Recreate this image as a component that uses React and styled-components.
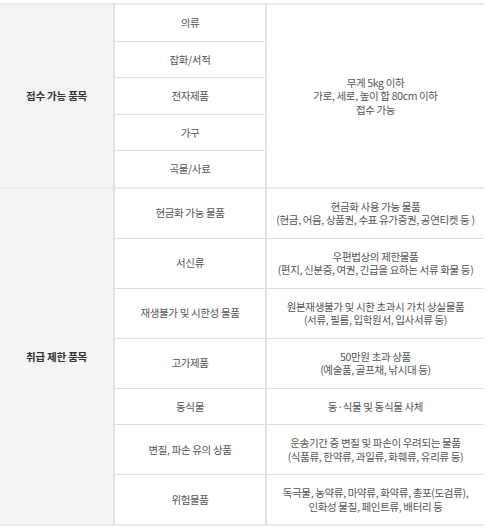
import React from "react";
import styled, { createGlobalStyle } from "styled-components";

const sections = [
  {
    title: "접수 가능 품목",
    rows: [
      { name: "의류" },
      { name: "잡화/서적" },
      { name: "전자제품" },
      { name: "가구" },
      { name: "곡물/사료" },
    ],
    shared: ["무게 5kg 이하", "가로, 세로, 높이 합 80cm 이하", "접수 가능"],
  },
  {
    title: "취급 제한 품목",
    rows: [
      { name: "현금화 가능 물품", desc: ["현금화 사용 가능 물품", "(현금, 어음, 상품권, 수표 유가증권, 공연티켓 등 )"] },
      { name: "서신류", desc: ["우편법상의 제한물품", "(편지, 신분증, 여권, 긴급을 요하는 서류 화물 등)"] },
      { name: "재생불가 및 시한성 물품", desc: ["원본재생불가 및 시한 초과시 가치 상실물품", "(서류, 필름, 입학원서, 입사서류 등)"] },
      { name: "고가제품", desc: ["50만원 초과 상품", "(예술품, 골프채, 낚시대 등)"] },
      { name: "동식물", desc: ["동·식물 및 동식물 사체"] },
      { name: "변질, 파손 유의 상품", desc: ["운송기간 중 변질 및 파손이 우려되는 물품", "(식품류, 한약류, 과일류, 화훼류, 유리류 등)"] },
      { name: "위험물품", desc: ["독극물, 농약류, 마약류, 화약류, 총포(도검류),", "인화성 물질, 페인트류, 배터리 등"] },
    ],
  },
];

const Lines = ({ lines }) =>
  lines.map((line, i) => (
    <React.Fragment key={i}>
      {i > 0 && <br />}
      {line}
    </React.Fragment>
  ));

const App = () => (
  <>
    <GlobalStyle />
    <Wrap>
      <Table>
        <colgroup>
          <col style={{ width: 114 }} />
          <col style={{ width: 152 }} />
          <col />
        </colgroup>
        {sections.map((section) => (
          <Section key={section.title}>
            {section.rows.map((row, i) => (
              <tr key={row.name}>
                {i === 0 && <HeadCell rowSpan={section.rows.length}>{section.title}</HeadCell>}
                <Cell>{row.name}</Cell>
                {row.desc && (
                  <Cell>
                    <Lines lines={row.desc} />
                  </Cell>
                )}
                {!row.desc && i === 0 && (
                  <Cell rowSpan={section.rows.length}>
                    <Lines lines={section.shared} />
                  </Cell>
                )}
              </tr>
            ))}
          </Section>
        ))}
      </Table>
    </Wrap>
  </>
);

export default App;

const GlobalStyle = createGlobalStyle`
  body {
    margin: 0;
    background: #fff;
    font-family: "Noto Sans CJK KR", "Noto Sans", sans-serif;
  }
`;

const Wrap = styled.div`
  width: 484px;
  padding-top: 3px;
`;

const Table = styled.table`
  width: 100%;
  border-collapse: collapse;
  table-layout: fixed;
  font-size: 10.5px;
  line-height: 13.5px;
  color: #555;
  text-align: center;
  border-top: 2px solid #ebebeb;
  border-bottom: 2px solid #ebebeb;
`;

const Section = styled.tbody`
  border-top: 2px solid #ebebeb;

  tr:last-child td {
    border-bottom: none;
  }
`;

const Cell = styled.td`
  padding: 11px 4px;
  border-bottom: 1px solid #dedede;
  border-left: 2px solid #e2e2e2;
  vertical-align: middle;
  letter-spacing: -0.35px;
`;

const HeadCell = styled.td`
  background: #f4f4f4;
  color: #333;
  font-weight: 700;
  vertical-align: middle;
  padding: 0;
  letter-spacing: -0.2px;
`;
